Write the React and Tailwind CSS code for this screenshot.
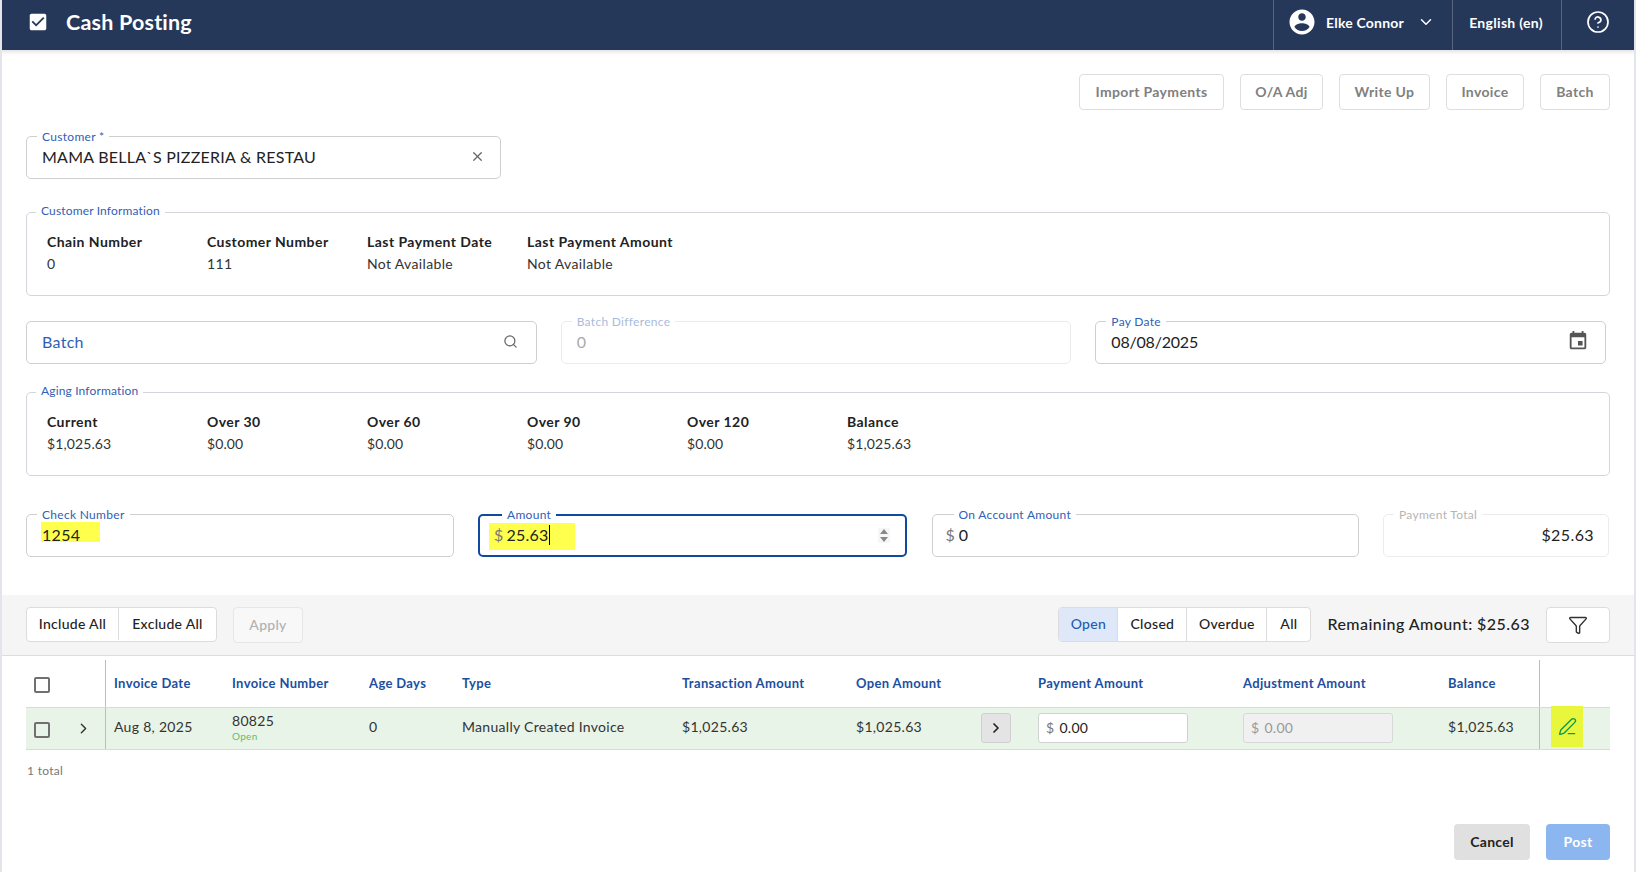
import React from "react";
import { X, Search, ChevronDown, ChevronRight, CircleHelp, Funnel, PenLine } from "lucide-react";

const Field = ({ label, className = "", labelClass = "text-[#3260b4]", border = "border-[#cfcfcf]", pos = "-top-[7px] left-[10px]", children }) => (
  <div className={`relative h-[43px] rounded-[5px] border bg-white flex items-center ${border} ${className}`}>
    <span className={`absolute bg-white px-[5px] text-[12px] leading-[14px] tracking-[0.3px] ${pos} ${labelClass}`}>{label}</span>
    {children}
  </div>
);

const Info = ({ label, items }) => (
  <div className="relative h-[84px] rounded-[5px] border border-[#d2d5dc] bg-white pl-[20px] pt-[18px]">
    <span className="absolute -top-[9px] left-[9px] bg-white px-[5px] text-[12px] leading-[14px] tracking-[0.15px] text-[#3260b4]">{label}</span>
    <div className="flex">
      {items.map(([k, v]) => (
        <div key={k} className="w-[160px] shrink-0">
          <div className="text-[14px] leading-[22px] font-bold tracking-[0.45px] text-[#222] whitespace-nowrap">{k}</div>
          <div className={`text-[14px] leading-[22px] text-[#333] whitespace-nowrap ${v.startsWith("$") ? "tracking-[0.1px]" : "tracking-[0.35px]"}`}>{v}</div>
        </div>
      ))}
    </div>
  </div>
);

const TopBtn = ({ w, children }) => (
  <button className={`h-[36px] pb-[2px] rounded-[4px] border border-[#dedede] bg-white text-[14px] font-bold tracking-[0.35px] text-[#808080] ${w}`}>{children}</button>
);

const GRID = "grid grid-cols-[80px_118px_137px_93px_220px_174px_125px_57px_205px_205px_100px_70px]";
const heads = ["Invoice Date", "Invoice Number", "Age Days", "Type", "Transaction Amount", "Open Amount", "", "Payment Amount", "Adjustment Amount", "Balance"];

export default function App() {
  return (
    <div className="w-[1636px] h-[872px] overflow-hidden bg-white border-x-2 border-[#e4e4ec] font-['Lato','Liberation_Sans',sans-serif] text-[#222]">
      <header className="h-[50px] -mx-[2px] bg-[#26385a] flex items-stretch text-white shadow-[0_2px_4px_rgba(0,0,0,0.12)] relative">
        <div className="w-[2px] bg-[#9aa3b5] opacity-40"></div>
        <div className="flex items-center flex-1 pl-[25px] pb-[6px]">
          <svg width="22" height="22" viewBox="0 0 24 24" fill="white"><path d="M19 3H5c-1.11 0-2 .9-2 2v14c0 1.1.89 2 2 2h14c1.11 0 2-.9 2-2V5c0-1.1-.89-2-2-2zm-9 14l-5-5 1.41-1.41L10 14.17l7.59-7.59L19 8l-9 9z" /></svg>
          <span className="ml-[17px] text-[21.5px] font-bold tracking-[0.2px]">Cash Posting</span>
        </div>
        <div className="w-[179px] border-l border-[#56647f] flex items-center pl-[13px] pb-[6px]">
          <svg width="30" height="30" viewBox="0 0 24 24" fill="white"><path d="M12 2C6.48 2 2 6.48 2 12s4.48 10 10 10 10-4.48 10-10S17.52 2 12 2zm0 3c1.66 0 3 1.34 3 3s-1.34 3-3 3-3-1.34-3-3 1.34-3 3-3zm0 14.2c-2.5 0-4.71-1.28-6-3.22.03-1.99 4-3.08 6-3.08 1.99 0 5.97 1.09 6 3.08-1.29 1.94-3.5 3.22-6 3.22z" /></svg>
          <span className="ml-[9px] text-[14px] font-bold tracking-[0.2px] whitespace-nowrap">Elke Connor</span>
          <ChevronDown size={18} className="ml-[13px]" />
        </div>
        <div className="w-[109px] border-l border-[#56647f] flex items-center justify-center pr-[2px] pb-[6px] text-[14px] font-bold tracking-[0.3px] whitespace-nowrap">English (en)</div>
        <div className="w-[75px] border-l border-[#56647f] flex items-center pl-[24px] pb-[6px]"><CircleHelp size={24} strokeWidth={1.7} /></div>
      </header>

      <main className="pl-[24px] pr-[24px]">
        <div className="flex justify-end gap-[16px] pt-[24px]">
          <TopBtn w="w-[145px]">Import Payments</TopBtn>
          <TopBtn w="w-[83px]">O/A Adj</TopBtn>
          <TopBtn w="w-[91px]">Write Up</TopBtn>
          <TopBtn w="w-[78px]">Invoice</TopBtn>
          <TopBtn w="w-[70px]">Batch</TopBtn>
        </div>

        <Field label="Customer *" className="w-[475px] mt-[26px] pl-[15px] pr-[15px] pb-[2px] justify-between">
          <span className="text-[16px] tracking-[0.25px] text-[#222] whitespace-nowrap">MAMA BELLA`S PIZZERIA &amp; RESTAU</span>
          <X size={15} className="text-[#666]" />
        </Field>

        <div className="mt-[33px]">
          <Info label="Customer Information" items={[["Chain Number", "0"], ["Customer Number", "111"], ["Last Payment Date", "Not Available"], ["Last Payment Amount", "Not Available"]]} />
        </div>

        <div className="grid grid-cols-3 gap-x-[24px] w-[1580px] mt-[25px]">
          <div className="h-[43px] rounded-[5px] border border-[#cfcfcf] flex items-center justify-between pl-[15px] pr-[18px] pb-[2px]">
            <span className="text-[16px] tracking-[0.3px] text-[#2f5fb3]">Batch</span>
            <Search size={15} className="text-[#666]" />
          </div>
          <Field label="Batch Difference" border="border-[#ececec]" labelClass="text-[#a9bcdd]" className="pl-[15px] pb-[2px]">
            <span className="text-[16px] text-[#aaa]">0</span>
          </Field>
          <Field label="Pay Date" className="pl-[15px] pr-[16px] pb-[2px] justify-between">
            <span className="text-[16px] -tracking-[0.2px]">08/08/2025</span>
            <svg width="22" height="22" viewBox="0 0 24 24" fill="#555" className="-mt-[2px]"><path d="M17 12h-5v5h5v-5zM16 1v2H8V1H6v2H5c-1.11 0-1.99.9-1.99 2L3 19c0 1.1.89 2 2 2h14c1.1 0 2-.9 2-2V5c0-1.1-.9-2-2-2h-1V1h-2zm3 18H5V8h14v11z" /></svg>
          </Field>
        </div>

        <div className="mt-[28px]">
          <Info label="Aging Information" items={[["Current", "$1,025.63"], ["Over 30", "$0.00"], ["Over 60", "$0.00"], ["Over 90", "$0.00"], ["Over 120", "$0.00"], ["Balance", "$1,025.63"]]} />
        </div>

        <div className="flex mt-[38px] gap-x-[24.5px]">
          <Field label="Check Number" className="w-[427.5px] pl-[14px]">
            <span className="bg-[#ffff4d] h-[20px] w-[59px] -mt-[7px] pl-[1px] block leading-[26px] text-[16px] tracking-[0.3px]">1254</span>
          </Field>
          <Field label="Amount" border="border-[#0f4a9e] border-2" pos="-top-[8px] left-[22px]" className="w-[429px] pl-[9px] pr-[15px] justify-between">
            <span className="bg-[#ffff4d] h-[27px] w-[86px] mt-[2px] pb-[3px] flex items-center pl-[5px] text-[16px] tracking-[0.2px]">
              <span className="text-[#777] mr-[3px]">$</span>25.63<span className="w-[1px] h-[20px] bg-black ml-[1px]"></span>
            </span>
            <span className="flex flex-col gap-[3px] bg-[#f6f6f6] px-[2px] py-[1px]">
              <span className="w-0 h-0 border-x-[4px] border-x-transparent border-b-[5px] border-b-[#888]"></span>
              <span className="w-0 h-0 border-x-[4px] border-x-transparent border-t-[5px] border-t-[#888]"></span>
            </span>
          </Field>
          <Field label="On Account Amount" pos="-top-[7px] left-[21px]" className="w-[427px] pl-[15px] pb-[2px]">
            <span className="text-[#777] text-[16px] mr-[4px] -ml-[2px]">$</span><span className="text-[16px]">0</span>
          </Field>
          <Field label="Payment Total" border="border-[#ececec]" labelClass="text-[#b5b5b5]" className="w-[226px] pr-[14px] pb-[2px] justify-end">
            <span className="text-[16px] tracking-[0.4px]">$25.63</span>
          </Field>
        </div>
      </main>

      <section className="mt-[38px] h-[61px] bg-[#f5f5f5] border-b border-[#dddddd] pl-[24px] pr-[24px] pt-[12px] flex items-start">
        <div className="flex h-[35px] pb-[1px] rounded-[4px] border border-[#dcdcdc] bg-white text-[14px] tracking-[0.3px] font-medium">
          <span className="w-[92px] flex items-center justify-center border-r border-[#dcdcdc] pb-[1px]">Include All</span>
          <span className="w-[97px] flex items-center justify-center pb-[1px]">Exclude All</span>
        </div>
        <button className="ml-[16px] w-[70px] h-[36px] rounded-[4px] border border-[#e6e6e6] bg-[#f8f8f8] text-[14px] font-medium tracking-[0.3px] text-[#b0b0b0] pb-[1px]">Apply</button>
        <div className="ml-auto flex h-[35px] rounded-[4px] border border-[#dcdcdc] bg-white text-[14px] tracking-[0.3px] font-medium">
          <span className="w-[59px] pb-[2px] flex items-center justify-center bg-[#deE8f9] text-[#1f5bb0] border-r border-[#dcdcdc]">Open</span>
          <span className="w-[69px] pb-[2px] flex items-center justify-center border-r border-[#dcdcdc]">Closed</span>
          <span className="w-[80px] pb-[2px] flex items-center justify-center border-r border-[#dcdcdc]">Overdue</span>
          <span className="w-[43px] pb-[2px] flex items-center justify-center">All</span>
        </div>
        <span className="ml-[16px] h-[35px] pb-[2px] flex items-center text-[16px] tracking-[0.45px] font-medium whitespace-nowrap">Remaining Amount: $25.63</span>
        <button className="ml-[16px] w-[64px] h-[36px] rounded-[4px] border border-[#dcdcdc] bg-white flex items-center justify-center"><Funnel size={20} strokeWidth={1.7} className="text-[#333]" /></button>
      </section>

      <section className="pl-[24px] pr-[24px]">
        <div className={`${GRID} h-[51px]`}>
          <div className="mt-[4px] border-r border-[#bcbcbc] flex items-center pl-[8px] pt-[3px]">
            <span className="w-[16px] h-[16px] rounded-[2px] border-2 border-[#707070]"></span>
          </div>
          {heads.map((h, i) => (
            <div key={i} className={`pl-[8px] flex items-center text-[13px] font-bold tracking-[0.35px] text-[#1c4f9f] whitespace-nowrap ${i === 9 ? "border-r border-[#bcbcbc] mt-[4px]" : "pt-[4px]"}`}>{h}</div>
          ))}
          <div></div>
        </div>
        <div className={`${GRID} h-[43px] bg-[#e8f4e8] border-y border-[#d4dcd4] text-[14px] tracking-[0.3px] text-[#333]`}>
          <div className="border-r border-[#bcbcbc] flex items-center pl-[8px] justify-between pr-[13px]">
            <span className="w-[16px] h-[16px] rounded-[2px] border-2 border-[#707070] mt-[3px]"></span>
            <ChevronRight size={17} className="text-[#333]" />
          </div>
          <div className="pl-[8px] pb-[4px] flex items-center">Aug 8, 2025</div>
          <div className="pl-[8px] pb-[4px] flex flex-col justify-center">
            <span className="leading-[18px]">80825</span>
            <span className="text-[10px] leading-[12px] text-[#66bb6a]">Open</span>
          </div>
          <div className="pl-[8px] pb-[4px] flex items-center">0</div>
          <div className="pl-[8px] pb-[4px] flex items-center whitespace-nowrap">Manually Created Invoice</div>
          <div className="pl-[8px] pb-[4px] flex items-center">$1,025.63</div>
          <div className="pl-[8px] pb-[4px] flex items-center">$1,025.63</div>
          <div className="pl-[8px] pb-[2px] flex items-center">
            <span className="w-[30px] h-[30px] rounded-[3px] border border-[#d0d0d0] bg-[#e4e4e4] flex items-center justify-center"><ChevronRight size={16} strokeWidth={2.6} className="text-[#222]" /></span>
          </div>
          <div className="pl-[8px] pb-[2px] flex items-center">
            <span className="w-[150px] h-[30px] rounded-[3px] border border-[#d0d0d0] bg-white flex items-center pl-[7px]"><span className="text-[#777] mr-[5px]">$</span><span className="text-[#222]">0.00</span></span>
          </div>
          <div className="pl-[8px] pb-[2px] flex items-center">
            <span className="w-[150px] h-[30px] rounded-[3px] border border-[#d8d8d8] bg-[#f0f0f0] flex items-center pl-[7px] text-[#999]"><span className="mr-[5px]">$</span>0.00</span>
          </div>
          <div className="pl-[8px] pb-[4px] flex items-center border-r border-[#bcbcbc]">$1,025.63</div>
          <div className="pl-[11px] flex items-center">
            <span className="w-[32px] h-[41px] bg-[#e8f63c] flex items-center justify-center -mt-[4px]"><PenLine size={19} strokeWidth={1.7} className="text-[#0b9a4a]" /></span>
          </div>
        </div>
        <div className="mt-[13px] text-[12px] tracking-[0.3px] text-[#777] pl-[1px] leading-[16px]">1 total</div>
        <div className="flex justify-end gap-[16px] mt-[45px]">
          <button className="w-[76px] h-[36px] pb-[2px] rounded-[4px] bg-[#e0e0e0] text-[14px] font-bold tracking-[0.3px] text-[#222]">Cancel</button>
          <button className="w-[64px] h-[36px] pb-[2px] rounded-[4px] bg-[#8cb6f0] text-[14px] font-bold tracking-[0.3px] text-white">Post</button>
        </div>
      </section>
    </div>
  );
}
